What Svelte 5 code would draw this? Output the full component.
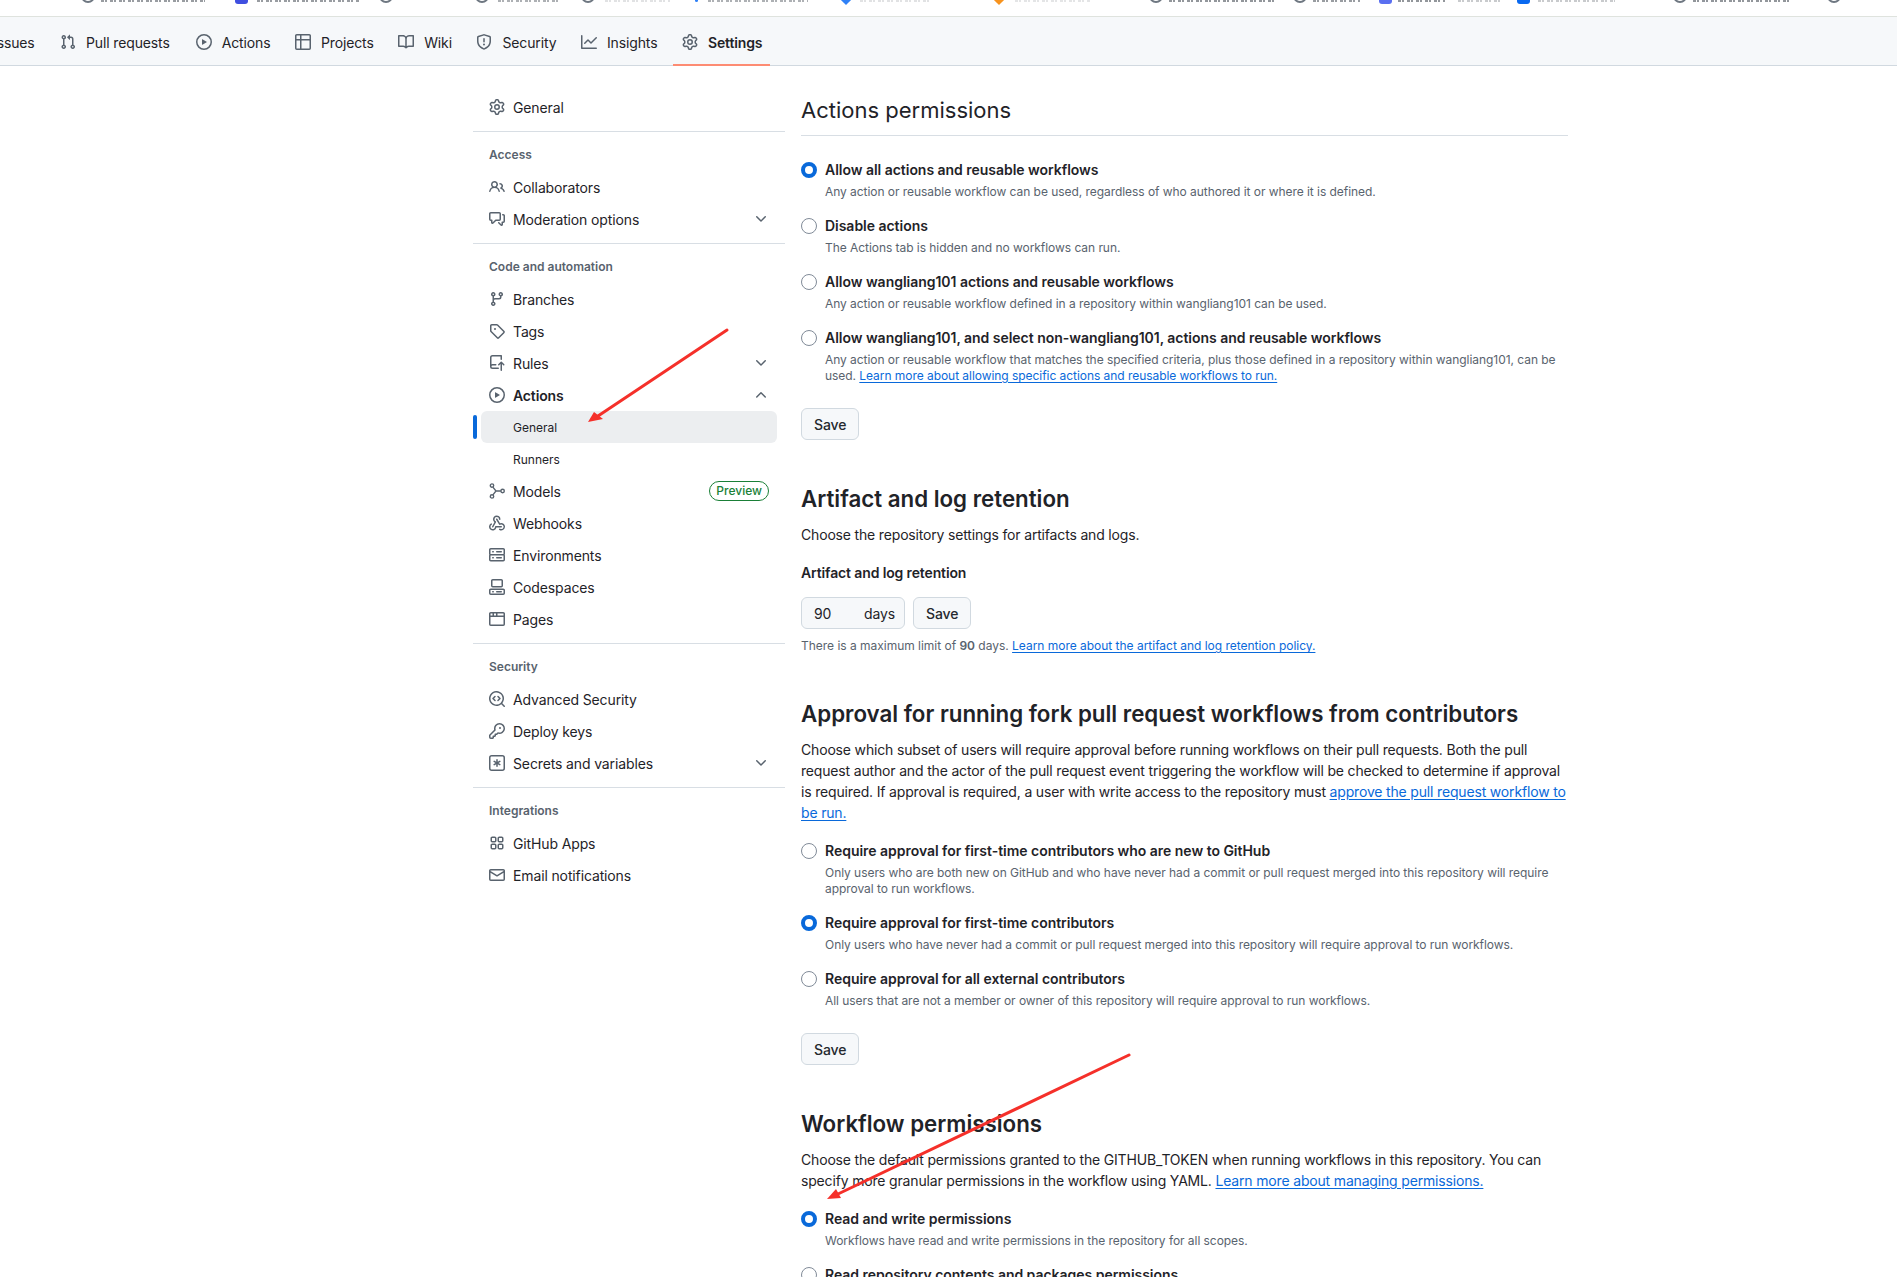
<script>
  const P = {
    gear: ["M8 0a8.2 8.2 0 0 1 .701.031C9.444.095 9.99.645 10.16 1.29l.288 1.107c.018.066.079.158.212.224.231.114.454.243.668.386.123.082.233.09.299.071l1.103-.303c.644-.176 1.392.021 1.82.63.27.385.506.792.704 1.218.315.675.111 1.422-.364 1.891l-.814.806c-.049.048-.098.147-.088.294.016.257.016.515 0 .772-.01.147.038.246.088.294l.814.806c.475.469.679 1.216.364 1.891a7.977 7.977 0 0 1-.704 1.217c-.428.61-1.176.807-1.82.63l-1.102-.302c-.067-.019-.177-.011-.3.071a5.909 5.909 0 0 1-.668.386c-.133.066-.194.158-.211.224l-.29 1.106c-.168.646-.715 1.196-1.458 1.26a8.006 8.006 0 0 1-1.402 0c-.743-.064-1.289-.614-1.458-1.26l-.289-1.106c-.018-.066-.079-.158-.212-.224a5.738 5.738 0 0 1-.668-.386c-.123-.082-.233-.09-.299-.071l-1.103.303c-.644.176-1.392-.021-1.82-.63a8.12 8.12 0 0 1-.704-1.218c-.315-.675-.111-1.422.363-1.891l.815-.806c.05-.048.098-.147.088-.294a6.214 6.214 0 0 1 0-.772c.01-.147-.038-.246-.088-.294l-.815-.806C.635 6.045.431 5.298.746 4.623a7.92 7.92 0 0 1 .704-1.217c.428-.61 1.176-.807 1.82-.63l1.102.302c.067.019.177.011.3-.071.214-.143.437-.272.668-.386.133-.066.194-.158.211-.224l.29-1.106C6.009.645 6.556.095 7.299.03 7.53.01 7.764 0 8 0Zm-.571 1.525c-.036.003-.108.036-.137.146l-.289 1.105c-.147.561-.549.967-.998 1.189-.173.086-.34.183-.5.29-.417.278-.97.423-1.529.27l-1.103-.303c-.109-.03-.175.016-.195.045-.22.312-.412.644-.573.99-.014.031-.021.11.059.19l.815.806c.411.406.562.957.53 1.456a4.709 4.709 0 0 0 0 .582c.032.499-.119 1.05-.53 1.456l-.815.806c-.081.08-.073.159-.059.19.162.346.353.677.573.989.02.03.085.076.195.046l1.102-.303c.56-.153 1.113-.008 1.53.27.161.107.328.204.501.29.447.222.85.629.997 1.189l.289 1.105c.029.109.101.143.137.146a6.6 6.6 0 0 0 1.142 0c.036-.003.108-.036.137-.146l.289-1.105c.147-.561.549-.967.998-1.189.173-.086.34-.183.5-.29.417-.278.97-.423 1.529-.27l1.103.303c.109.029.175-.016.195-.045.22-.313.411-.644.573-.99.014-.031.021-.11-.059-.19l-.815-.806c-.411-.406-.562-.957-.53-1.456a4.709 4.709 0 0 0 0-.582c-.032-.499.119-1.05.53-1.456l.815-.806c.081-.08.073-.159.059-.19a6.464 6.464 0 0 0-.573-.989c-.02-.03-.085-.076-.195-.046l-1.102.303c-.56.153-1.113.008-1.53-.27a4.44 4.44 0 0 0-.501-.29c-.447-.222-.85-.629-.997-1.189l-.289-1.105c-.029-.11-.101-.143-.137-.146a6.6 6.6 0 0 0-1.142 0ZM11 8a3 3 0 1 1-6 0 3 3 0 0 1 6 0ZM9.5 8a1.5 1.5 0 1 0-3.001.001A1.5 1.5 0 0 0 9.5 8Z"],
    pr: ["M1.5 3.25a2.25 2.25 0 1 1 3 2.122v5.256a2.251 2.251 0 1 1-1.5 0V5.372A2.25 2.25 0 0 1 1.5 3.25Zm5.677-.177L9.573.677A.25.25 0 0 1 10 .854V2.5h1A2.5 2.5 0 0 1 13.5 5v5.628a2.251 2.251 0 1 1-1.5 0V5a1 1 0 0 0-1-1h-1v1.646a.25.25 0 0 1-.427.177L7.177 3.427a.25.25 0 0 1 0-.354ZM3.75 2.5a.75.75 0 1 0 0 1.5.75.75 0 0 0 0-1.5Zm0 9.5a.75.75 0 1 0 0 1.5.75.75 0 0 0 0-1.5Zm8.25.75a.75.75 0 1 0 1.5 0 .75.75 0 0 0-1.5 0Z"],
    play: ["M8 0a8 8 0 1 1 0 16A8 8 0 0 1 8 0ZM1.5 8a6.5 6.5 0 1 0 13 0 6.5 6.5 0 0 0-13 0Zm4.879-2.773 4.264 2.559a.25.25 0 0 1 0 .428l-4.264 2.559A.25.25 0 0 1 6 10.559V5.442a.25.25 0 0 1 .379-.215Z"],
    table: ["M0 1.75C0 .784.784 0 1.75 0h12.5C15.216 0 16 .784 16 1.75v12.5A1.75 1.75 0 0 1 14.25 16H1.75A1.75 1.75 0 0 1 0 14.25ZM6.5 6.5v8h7.75a.25.25 0 0 0 .25-.25V6.5Zm8-1.5V1.75a.25.25 0 0 0-.25-.25H6.5V5Zm-13 1.5v7.75c0 .138.112.25.25.25H5v-8ZM5 5V1.5H1.75a.25.25 0 0 0-.25.25V5Z"],
    book: ["M0 1.75A.75.75 0 0 1 .75 1h4.253c1.227 0 2.317.59 3 1.501A3.743 3.743 0 0 1 11.006 1h4.245a.75.75 0 0 1 .75.75v10.5a.75.75 0 0 1-.75.75h-4.507a2.25 2.25 0 0 0-1.591.659l-.622.621a.75.75 0 0 1-1.06 0l-.622-.621A2.25 2.25 0 0 0 5.258 13H.75a.75.75 0 0 1-.75-.75Zm7.251 10.324.004-5.073-.002-2.253A2.25 2.25 0 0 0 5.003 2.5H1.5v9h3.757a3.75 3.75 0 0 1 1.994.574ZM8.755 4.75l-.004 7.322a3.752 3.752 0 0 1 1.992-.572H14.5v-9h-3.495a2.25 2.25 0 0 0-2.25 2.25Z"],
    shield: ["M7.467.133a1.748 1.748 0 0 1 1.066 0l5.25 1.68A1.75 1.75 0 0 1 15 3.48V7c0 1.566-.32 3.182-1.303 4.682-.983 1.498-2.585 2.813-5.032 3.855a1.697 1.697 0 0 1-1.33 0c-2.447-1.042-4.049-2.357-5.032-3.855C1.32 10.182 1 8.566 1 7V3.48a1.75 1.75 0 0 1 1.217-1.667Zm.61 1.429a.25.25 0 0 0-.153 0l-5.25 1.68a.25.25 0 0 0-.174.238V7c0 1.358.275 2.666 1.057 3.86.784 1.194 2.121 2.34 4.366 3.297a.196.196 0 0 0 .154 0c2.245-.956 3.582-2.104 4.366-3.298C13.225 9.666 13.5 8.36 13.5 7V3.48a.251.251 0 0 0-.174-.237l-5.25-1.68ZM8.75 4.75v3a.75.75 0 0 1-1.5 0v-3a.75.75 0 0 1 1.5 0ZM9 10.5a1 1 0 1 1-2 0 1 1 0 0 1 2 0Z"],
    graph: ["M1.5 1.75V13.5h13.75a.75.75 0 0 1 0 1.5H.75a.75.75 0 0 1-.75-.75V1.75a.75.75 0 0 1 1.5 0Zm14.28 2.53-5.25 5.25a.75.75 0 0 1-1.06 0L7 7.06 4.28 9.78a.751.751 0 0 1-1.042-.018.751.751 0 0 1-.018-1.042l3.25-3.25a.75.75 0 0 1 1.06 0L10 7.94l4.72-4.72a.751.751 0 0 1 1.042.018.751.751 0 0 1 .018 1.042Z"],
    people: ["M2 5.5a3.5 3.5 0 1 1 5.898 2.549 5.508 5.508 0 0 1 3.034 4.084.75.75 0 1 1-1.482.235 4 4 0 0 0-7.9 0 .75.75 0 0 1-1.482-.236A5.507 5.507 0 0 1 3.102 8.05 3.493 3.493 0 0 1 2 5.5ZM11 4a3.001 3.001 0 0 1 2.22 5.018 5.01 5.01 0 0 1 2.56 3.012.749.749 0 0 1-.885.954.752.752 0 0 1-.549-.514 3.507 3.507 0 0 0-2.522-2.372.75.75 0 0 1-.574-.73v-.352a.75.75 0 0 1 .416-.672A1.5 1.5 0 0 0 11 5.5.75.75 0 0 1 11 4Zm-5.5-.5a2 2 0 1 0-.001 3.999A2 2 0 0 0 5.5 3.5Z"],
    comment: ["M1.75 1h8.5c.966 0 1.75.784 1.75 1.75v5.5A1.75 1.75 0 0 1 10.25 10H7.061l-2.574 2.573A1.458 1.458 0 0 1 2 11.543V10h-.25A1.75 1.75 0 0 1 0 8.25v-5.5C0 1.784.784 1 1.75 1ZM1.5 2.75v5.5c0 .138.112.25.25.25h1a.75.75 0 0 1 .75.75v2.19l2.72-2.72a.749.749 0 0 1 .53-.22h3.5a.25.25 0 0 0 .25-.25v-5.5a.25.25 0 0 0-.25-.25h-8.5a.25.25 0 0 0-.25.25Zm13 2a.25.25 0 0 0-.25-.25h-.5a.75.75 0 0 1 0-1.5h.5c.966 0 1.75.784 1.75 1.75v5.5A1.75 1.75 0 0 1 14.25 12H14v1.543a1.458 1.458 0 0 1-2.487 1.03L9.22 12.28a.749.749 0 0 1 .326-1.275.749.749 0 0 1 .734.215l2.22 2.22v-2.19a.75.75 0 0 1 .75-.75h1a.25.25 0 0 0 .25-.25Z"],
    branch: ["M9.5 3.25a2.25 2.25 0 1 1 3 2.122V6A2.5 2.5 0 0 1 10 8.5H6a1 1 0 0 0-1 1v1.128a2.251 2.251 0 1 1-1.5 0V5.372a2.25 2.25 0 1 1 1.5 0v1.836A2.493 2.493 0 0 1 6 7h4a1 1 0 0 0 1-1v-.628A2.25 2.25 0 0 1 9.5 3.25Zm-6 0a.75.75 0 1 0 1.5 0 .75.75 0 0 0-1.5 0Zm8.25-.75a.75.75 0 1 0 0 1.5.75.75 0 0 0 0-1.5ZM4.25 12a.75.75 0 1 0 0 1.5.75.75 0 0 0 0-1.5Z"],
    tag: ["M1 7.775V2.75C1 1.784 1.784 1 2.75 1h5.025c.464 0 .91.184 1.238.513l6.25 6.25a1.75 1.75 0 0 1 0 2.474l-5.026 5.026a1.75 1.75 0 0 1-2.474 0l-6.25-6.25A1.752 1.752 0 0 1 1 7.775Zm1.5 0c0 .066.026.13.073.177l6.25 6.25a.25.25 0 0 0 .354 0l5.025-5.025a.25.25 0 0 0 0-.354l-6.25-6.25a.25.25 0 0 0-.177-.073H2.75a.25.25 0 0 0-.25.25ZM6 5a1 1 0 1 1 0 2 1 1 0 0 1 0-2Z"],
    rules: ["M1 2.5A2.5 2.5 0 0 1 3.5 0h8.75a.75.75 0 0 1 .75.75v3.5a.75.75 0 0 1-1.5 0V1.5h-8a1 1 0 0 0-1 1v6.708A2.493 2.493 0 0 1 3.5 9h3.25a.75.75 0 0 1 0 1.5H3.5a1 1 0 0 0 0 2h5.75a.75.75 0 0 1 0 1.5H3.5A2.5 2.5 0 0 1 1 11.5Zm13.23 7.79h-.001l-1.224-1.224v6.184a.75.75 0 0 1-1.5 0V9.066L10.28 10.29a.75.75 0 0 1-1.06-1.061l2.505-2.504a.75.75 0 0 1 1.06 0L15.29 9.23a.751.751 0 0 1-.018 1.042.751.751 0 0 1-1.042.018Z"],
    webhook: ["M5.5 4.25a2.25 2.25 0 0 1 4.5 0 .75.75 0 0 0 1.5 0 3.75 3.75 0 1 0-6.14 2.889l-2.272 4.258a.75.75 0 0 0 1.324.706L7 7.25a.75.75 0 0 0-.309-1.015A2.25 2.25 0 0 1 5.5 4.25Z", "M7.364 3.607a.75.75 0 0 1 1.03.257l2.608 4.349a3.75 3.75 0 1 1-.628 6.785.75.75 0 0 1 .752-1.299 2.25 2.25 0 1 0-.033-3.88.75.75 0 0 1-1.03-.256L7.107 4.636a.75.75 0 0 1 .257-1.03Z", "M2.9 8.776A.75.75 0 0 1 2.625 9.8 2.25 2.25 0 1 0 6 11.75a.75.75 0 0 1 .75-.751h5.5a.75.75 0 0 1 0 1.5H7.425a3.751 3.751 0 1 1-5.55-3.998.75.75 0 0 1 1.024.274Z"],
    server: ["M1.75 1h12.5c.966 0 1.75.784 1.75 1.75v4c0 .372-.116.717-.314 1 .198.283.314.628.314 1v4a1.75 1.75 0 0 1-1.75 1.75H1.75A1.75 1.75 0 0 1 0 12.75v-4c0-.358.109-.707.314-1a1.739 1.739 0 0 1-.314-1v-4C0 1.784.784 1 1.75 1ZM1.5 2.75v4c0 .138.112.25.25.25h12.5a.25.25 0 0 0 .25-.25v-4a.25.25 0 0 0-.25-.25H1.75a.25.25 0 0 0-.25.25Zm.25 5.75a.25.25 0 0 0-.25.25v4c0 .138.112.25.25.25h12.5a.25.25 0 0 0 .25-.25v-4a.25.25 0 0 0-.25-.25ZM7 4.75A.75.75 0 0 1 7.75 4h4.5a.75.75 0 0 1 0 1.5h-4.5A.75.75 0 0 1 7 4.75ZM7.75 10h4.5a.75.75 0 0 1 0 1.5h-4.5a.75.75 0 0 1 0-1.5ZM3 4.75A.75.75 0 0 1 3.75 4h.5a.75.75 0 0 1 0 1.5h-.5A.75.75 0 0 1 3 4.75ZM3.75 10h.5a.75.75 0 0 1 0 1.5h-.5a.75.75 0 0 1 0-1.5Z"],
    codespaces: ["M0 11.25c0-.966.784-1.75 1.75-1.75h12.5c.966 0 1.75.784 1.75 1.75v3A1.75 1.75 0 0 1 14.25 16H1.75A1.75 1.75 0 0 1 0 14.25Zm2-9.5C2 .784 2.784 0 3.75 0h8.5C13.216 0 14 .784 14 1.75v5a1.75 1.75 0 0 1-1.75 1.75h-8.5A1.75 1.75 0 0 1 2 6.75Zm1.75-.25a.25.25 0 0 0-.25.25v5c0 .138.112.25.25.25h8.5a.25.25 0 0 0 .25-.25v-5a.25.25 0 0 0-.25-.25Zm-2 9.5a.25.25 0 0 0-.25.25v3c0 .138.112.25.25.25h12.5a.25.25 0 0 0 .25-.25v-3a.25.25 0 0 0-.25-.25Z", "M7 12.75a.75.75 0 0 1 .75-.75h4.5a.75.75 0 0 1 0 1.5h-4.5a.75.75 0 0 1-.75-.75Zm-4 0a.75.75 0 0 1 .75-.75h.5a.75.75 0 0 1 0 1.5h-.5a.75.75 0 0 1-.75-.75Z"],
    browser: ["M0 2.75C0 1.784.784 1 1.75 1h12.5c.966 0 1.75.784 1.75 1.75v10.5A1.75 1.75 0 0 1 14.25 15H1.75A1.75 1.75 0 0 1 0 13.25ZM14.5 6h-13v7.25c0 .138.112.25.25.25h12.5a.25.25 0 0 0 .25-.25Zm-6-3.5v2h6V2.75a.25.25 0 0 0-.25-.25ZM5 2.5v2h2v-2Zm-3.25 0a.25.25 0 0 0-.25.25V4.5h2v-2Z"],
    codescan: ["M8.47 4.97a.75.75 0 0 0 0 1.06L9.94 7.5 8.47 8.97a.75.75 0 1 0 1.06 1.06l2-2a.75.75 0 0 0 0-1.06l-2-2a.75.75 0 0 0-1.06 0ZM6.53 6.03a.75.75 0 0 0-1.06-1.06l-2 2a.75.75 0 0 0 0 1.06l2 2a.75.75 0 1 0 1.06-1.06L5.06 7.5l1.47-1.47Z", "M12.246 13.307a7.501 7.501 0 1 1 1.06-1.06l2.474 2.473a.749.749 0 0 1-.326 1.275.749.749 0 0 1-.734-.215ZM1.5 7.5a6.002 6.002 0 0 0 3.608 5.504 6.002 6.002 0 0 0 6.486-1.117.748.748 0 0 1 .292-.293A6 6 0 1 0 1.5 7.5Z"],
    key: ["M10.5 0a5.499 5.499 0 1 1-1.288 10.848l-.932.932a.749.749 0 0 1-.53.22H7v.75a.749.749 0 0 1-.22.53l-.5.5a.749.749 0 0 1-.53.22H5v.75a.749.749 0 0 1-.22.53l-.5.5a.749.749 0 0 1-.53.22h-2A1.75 1.75 0 0 1 0 14.25v-2c0-.199.079-.389.22-.53l4.932-4.932A5.5 5.5 0 0 1 10.5 0Zm-4 5.5c-.001.431.069.86.205 1.269a.75.75 0 0 1-.181.768L1.5 12.56v1.69c0 .138.112.25.25.25h1.69l.06-.06v-1.19a.75.75 0 0 1 .75-.75h1.19l.06-.06v-1.19a.75.75 0 0 1 .75-.75h1.19l1.023-1.025a.75.75 0 0 1 .768-.18A4 4 0 1 0 6.5 5.5ZM11 6a1 1 0 1 1 0-2 1 1 0 0 1 0 2Z"],
    asterisk: ["M0 2.75A2.75 2.75 0 0 1 2.75 0h10.5A2.75 2.75 0 0 1 16 2.75v10.5A2.75 2.75 0 0 1 13.25 16H2.75A2.75 2.75 0 0 1 0 13.25ZM2.75 1.5c-.69 0-1.25.56-1.25 1.25v10.5c0 .69.56 1.25 1.25 1.25h10.5c.69 0 1.25-.56 1.25-1.25V2.75c0-.69-.56-1.25-1.25-1.25Z", "M8 4a.75.75 0 0 1 .75.75V6.7l1.69-.975a.75.75 0 0 1 .75 1.3L9.5 8l1.69.976a.75.75 0 0 1-.75 1.298L8.75 9.3v1.951a.75.75 0 0 1-1.5 0V9.299l-1.69.976a.75.75 0 0 1-.75-1.3L6.5 8l-1.69-.975a.75.75 0 0 1 .75-1.3l1.69.976V4.75A.75.75 0 0 1 8 4Z"],
    apps: ["M1.5 3.25c0-.966.784-1.75 1.75-1.75h2.5c.966 0 1.75.784 1.75 1.75v2.5A1.75 1.75 0 0 1 5.75 7.5h-2.5A1.75 1.75 0 0 1 1.5 5.75Zm7 0c0-.966.784-1.75 1.75-1.75h2.5c.966 0 1.75.784 1.75 1.75v2.5a1.75 1.75 0 0 1-1.75 1.75h-2.5A1.75 1.75 0 0 1 8.5 5.75Zm-7 7c0-.966.784-1.75 1.75-1.75h2.5c.966 0 1.75.784 1.75 1.75v2.5a1.75 1.75 0 0 1-1.75 1.75h-2.5a1.75 1.75 0 0 1-1.75-1.75Zm7 0c0-.966.784-1.75 1.75-1.75h2.5c.966 0 1.75.784 1.75 1.75v2.5a1.75 1.75 0 0 1-1.75 1.75h-2.5a1.75 1.75 0 0 1-1.75-1.75ZM3.25 3a.25.25 0 0 0-.25.25v2.5c0 .138.112.25.25.25h2.5A.25.25 0 0 0 6 5.75v-2.5A.25.25 0 0 0 5.75 3Zm7 0a.25.25 0 0 0-.25.25v2.5c0 .138.112.25.25.25h2.5a.25.25 0 0 0 .25-.25v-2.5a.25.25 0 0 0-.25-.25ZM3 10.25v2.5c0 .138.112.25.25.25h2.5a.25.25 0 0 0 .25-.25v-2.5a.25.25 0 0 0-.25-.25h-2.5a.25.25 0 0 0-.25.25Zm7.25-.25a.25.25 0 0 0-.25.25v2.5c0 .138.112.25.25.25h2.5a.25.25 0 0 0 .25-.25v-2.5a.25.25 0 0 0-.25-.25Z"],
    mail: ["M1.75 2h12.5c.966 0 1.75.784 1.75 1.75v8.5A1.75 1.75 0 0 1 14.25 14H1.75A1.75 1.75 0 0 1 0 12.25v-8.5C0 2.784.784 2 1.75 2ZM1.5 12.251c0 .138.112.25.25.25h12.5a.25.25 0 0 0 .25-.25V5.809L8.38 9.397a.75.75 0 0 1-.76 0L1.5 5.809v6.442Zm13-8.181v-.32a.25.25 0 0 0-.25-.25H1.75a.25.25 0 0 0-.25.25v.32L8 7.88Z"],
    down: ["M12.78 5.22a.749.749 0 0 1 0 1.06l-4.25 4.25a.749.749 0 0 1-1.06 0L3.22 6.28a.749.749 0 1 1 1.06-1.06L8 8.939l3.72-3.719a.749.749 0 0 1 1.06 0Z"],
    up: ["M3.22 10.53a.749.749 0 0 1 0-1.06l4.25-4.25a.749.749 0 0 1 1.06 0l4.25 4.25a.749.749 0 1 1-1.06 1.06L8 6.811 4.28 10.53a.749.749 0 0 1-1.06 0Z"]
  };

  const tabs = [
    { label: "Pull requests", icon: "pr" },
    { label: "Actions", icon: "play" },
    { label: "Projects", icon: "table" },
    { label: "Wiki", icon: "book" },
    { label: "Security", icon: "shield" },
    { label: "Insights", icon: "graph" },
    { label: "Settings", icon: "gear", active: true }
  ];

  const groups = [
    { title: "Access", items: [
      { label: "Collaborators", icon: "people" },
      { label: "Moderation options", icon: "comment", chev: "down" }
    ]},
    { title: "Code and automation", items: [
      { label: "Branches", icon: "branch" },
      { label: "Tags", icon: "tag" },
      { label: "Rules", icon: "rules", chev: "down" },
      { label: "Actions", icon: "play", chev: "up", bold: true },
      { label: "General", sub: true, current: true },
      { label: "Runners", sub: true },
      { label: "Models", icon: "models", badge: "Preview" },
      { label: "Webhooks", icon: "webhook" },
      { label: "Environments", icon: "server" },
      { label: "Codespaces", icon: "codespaces" },
      { label: "Pages", icon: "browser" }
    ]},
    { title: "Security", items: [
      { label: "Advanced Security", icon: "codescan" },
      { label: "Deploy keys", icon: "key" },
      { label: "Secrets and variables", icon: "asterisk", chev: "down" }
    ]},
    { title: "Integrations", items: [
      { label: "GitHub Apps", icon: "apps" },
      { label: "Email notifications", icon: "mail" }
    ]}
  ];

  // Bottoms of the browser bookmark bar, of which only the last pixels are in frame.
  const marks = [
    { x: 81, k: "ring" }, { x: 235, k: "block", c: "#3f4fe0" }, { x: 379, k: "ring" }, { x: 475, k: "ring" },
    { x: 581, k: "ring" }, { x: 695, k: "dot", c: "#2f81f7" }, { x: 841, k: "drop", c: "#2f81f7" },
    { x: 994, k: "drop", c: "#f7931e" }, { x: 1149, k: "ring" }, { x: 1293, k: "ring" },
    { x: 1379, k: "block", c: "#5a6ff0" }, { x: 1517, k: "block", c: "#0969f0" }, { x: 1673, k: "ring" }, { x: 1827, k: "ring" }
  ];
  const texts = [
    [101, 205, .75], [257, 360, .75], [498, 560, .6], [605, 670, .22], [708, 808, .6],
    [860, 930, .22], [1015, 1090, .2], [1169, 1275, .8], [1313, 1360, .75], [1398, 1445, .8],
    [1458, 1500, .4], [1538, 1615, .4], [1693, 1790, .8]
  ];
</script>

{#snippet icon(name)}
  <svg class="ic" viewBox="0 0 16 16" width="16" height="16" aria-hidden="true">
    {#if name === "models"}
      <g fill="none" stroke="currentColor" stroke-width="1.4">
        <circle cx="3" cy="2.6" r="1.7" /><circle cx="3" cy="13.4" r="1.7" /><circle cx="13.6" cy="8" r="1.7" />
        <path d="M3.9 4.1 7 8 3.9 11.9M7 8h4.9" />
      </g>
    {:else}
      {#each P[name] as d}<path {d} fill="currentColor" fill-rule="evenodd" />{/each}
    {/if}
  </svg>
{/snippet}

{#snippet row(item)}
  <div class="row" class:current={item.current}>
    {#if item.current}<span class="bar"></span>{/if}
    <div class="row-inner">
      <span class="lead">{#if item.icon}{@render icon(item.icon)}{/if}</span>
      <span class="lbl" class:bold={item.bold} class:sub={item.sub}>{item.label}</span>
      {#if item.badge}<span class="badge">{item.badge}</span>{/if}
      {#if item.chev}<span class="chev">{@render icon(item.chev)}</span>{/if}
    </div>
  </div>
{/snippet}

{#snippet radio(checked, label, note, link = "")}
  <div class="radio-row">
    <span class="radio" class:on={checked}></span>
    <div class="radio-text">
      <div class="radio-label">{label}</div>
      <div class="radio-note">{note}{#if link}{" "}<a href="#x">{link}</a>{/if}</div>
    </div>
  </div>
{/snippet}

<div class="page">
  <div class="bookmarks">
    {#each marks as m}
      <i class="mark {m.k}" style="left:{m.x}px;{m.c ? `--c:${m.c}` : ''}"></i>
    {/each}
    {#each texts as t}
      <i class="mtext" style="left:{t[0]}px;width:{t[1] - t[0]}px;opacity:{t[2]}"></i>
    {/each}
  </div>

  <nav class="tabs">
    <span class="tab cut">Issues</span>
    {#each tabs as t}
      <span class="tab" class:active={t.active}>
        {@render icon(t.icon)}<span>{t.label}</span>
      </span>
    {/each}
  </nav>

  <div class="layout">
    <aside class="side">
      <div class="row"><div class="row-inner"><span class="lead">{@render icon("gear")}</span><span class="lbl">General</span></div></div>
      {#each groups as g}
        <div class="group">
          <div class="group-title">{g.title}</div>
          {#each g.items as item}{@render row(item)}{/each}
        </div>
      {/each}
    </aside>

    <main class="main">
      <h2 class="h-first">Actions permissions</h2>
      <div class="opts first">
        {@render radio(true, "Allow all actions and reusable workflows", "Any action or reusable workflow can be used, regardless of who authored it or where it is defined.")}
        {@render radio(false, "Disable actions", "The Actions tab is hidden and no workflows can run.")}
        {@render radio(false, "Allow wangliang101 actions and reusable workflows", "Any action or reusable workflow defined in a repository within wangliang101 can be used.")}
        {@render radio(false, "Allow wangliang101, and select non-wangliang101, actions and reusable workflows", "Any action or reusable workflow that matches the specified criteria, plus those defined in a repository within wangliang101, can be used.", "Learn more about allowing specific actions and reusable workflows to run.")}
      </div>
      <button class="btn save1">Save</button>

      <h2 class="h-sec s2">Artifact and log retention</h2>
      <p class="para">Choose the repository settings for artifacts and logs.</p>
      <div class="field-label">Artifact and log retention</div>
      <div class="retention">
        <div class="days"><span>90</span><span>days</span></div>
        <button class="btn">Save</button>
      </div>
      <div class="limit">There is a maximum limit of <strong>90</strong> days. <a href="#x">Learn more about the artifact and log retention policy.</a></div>

      <h2 class="h-sec s3">Approval for running fork pull request workflows from contributors</h2>
      <p class="para">Choose which subset of users will require approval before running workflows on their pull requests. Both the pull request author and the actor of the pull request event triggering the workflow will be checked to determine if approval is required. If approval is required, a user with write access to the repository must <a href="#x">approve the pull request workflow to be run.</a></p>
      <div class="opts o2">
        {@render radio(false, "Require approval for first-time contributors who are new to GitHub", "Only users who are both new on GitHub and who have never had a commit or pull request merged into this repository will require approval to run workflows.")}
        {@render radio(true, "Require approval for first-time contributors", "Only users who have never had a commit or pull request merged into this repository will require approval to run workflows.")}
        {@render radio(false, "Require approval for all external contributors", "All users that are not a member or owner of this repository will require approval to run workflows.")}
      </div>
      <button class="btn save1">Save</button>

      <h2 class="h-sec s4">Workflow permissions</h2>
      <p class="para">Choose the default permissions granted to the GITHUB_TOKEN when running workflows in this repository. You can specify more granular permissions in the workflow using YAML. <a href="#x">Learn more about managing permissions.</a></p>
      <div class="opts o3">
        {@render radio(true, "Read and write permissions", "Workflows have read and write permissions in the repository for all scopes.")}
        {@render radio(false, "Read repository contents and packages permissions", "")}
      </div>
    </main>
  </div>

  <svg class="arrows" width="1897" height="1277" viewBox="0 0 1897 1277" aria-hidden="true">
    <g stroke="#f5302a" stroke-width="3" fill="#f5302a" stroke-linecap="round">
      <line x1="727" y1="330" x2="598" y2="416" />
      <polygon stroke="none" points="588,422 594,412 603,419" />
      <line x1="1129" y1="1055" x2="838" y2="1194" />
      <polygon stroke="none" points="827,1199 836,1189 841,1198" />
    </g>
  </svg>
</div>

<style>
  :global(body) { margin: 0; background: #fff; }
  .page {
    position: relative; width: 1897px; height: 1277px; overflow: hidden; background: #fff;
    font-family: Inter, "Noto Sans", "Liberation Sans", sans-serif; color: #1f2328;
    font-size: 14px; letter-spacing: -0.13px;
  }
  .bookmarks { position: relative; height: 16px; border-bottom: 1px solid #dfe3de; overflow: hidden; }
  .mark { position: absolute; display: block; --c: #6e7781; }
  .mark.ring { top: -11px; width: 10px; height: 10px; border: 2px solid #6e7781; border-radius: 50%; }
  .mark.block { top: -8px; width: 13px; height: 12px; border-radius: 3px; background: var(--c); }
  .mark.dot { top: -1px; width: 3px; height: 3px; border-radius: 50%; background: var(--c); }
  .mark.drop { top: -7px; width: 10px; height: 10px; background: var(--c); transform: rotate(45deg); }
  .mtext {
    position: absolute; top: 0; height: 2px; display: block;
    background: repeating-linear-gradient(90deg, #777c82 0 3px, #fff 3px 4px, #777c82 4px 6px, #fff 6px 9px);
  }

  .tabs {
    height: 49px; box-sizing: border-box; background: #f6f8fa; border-bottom: 1px solid #d1d9e0;
    display: flex; align-items: stretch; padding: 2px 0 0 60px; position: relative;
  }
  .tab { display: flex; align-items: center; gap: 10px; margin-right: 24.5px; position: relative; white-space: nowrap; }
  .tab:nth-child(2) { margin-right: 26px; }
  .tab :global(svg) { color: #59636e; flex: none; }
  .tab.cut { position: absolute; left: -7px; top: 2px; bottom: 0; margin: 0; }
  .tab.active { font-weight: 600; }
  .tab.active::after {
    content: ""; position: absolute; left: -9px; right: -8px; bottom: -1px; height: 2px; background: #fd8c73;
  }

  .layout { display: flex; align-items: flex-start; padding-left: 473px; }

  .side { width: 312px; flex: none; padding-top: 25px; }
  .row { height: 32px; position: relative; }
  .row-inner { height: 32px; margin: 0 8px; display: flex; align-items: center; border-radius: 6px; padding: 0 8px; }
  .lead { width: 16px; height: 16px; margin-right: 8px; color: #59636e; flex: none; display: flex; }
  .lbl { flex: 1; white-space: nowrap; }
  .lbl.bold { font-weight: 600; }
  .lbl.sub { font-size: 12px; letter-spacing: 0; }
  .chev { color: #59636e; display: flex; }
  .row.current .row-inner { background: #eceef0; }
  .bar { position: absolute; left: 0; top: 4px; bottom: 4px; width: 4px; border-radius: 2px; background: #0969da; }
  .badge {
    font-size: 12px; font-weight: 500; line-height: 18px; letter-spacing: 0; color: #1a7f37; border: 1px solid #1a7f37;
    border-radius: 10px; padding: 0 6px;
  }
  .group { border-top: 1px solid #d8dee4; margin-top: 8px; padding-top: 7px; }
  .group-title { height: 32px; padding-left: 16px; line-height: 32px; font-size: 12px; font-weight: 600; color: #59636e; letter-spacing: 0; }

  .main { width: 767px; margin-left: 16px; flex: none; }
  h2 { margin: 0; line-height: 30px; color: #1f2328; white-space: nowrap; letter-spacing: 0; }
  .h-first { font-size: 22px; font-weight: 400; margin-top: 29px; padding-bottom: 10px; border-bottom: 1px solid #d8dee4; height: 30px; }
  .h-sec { font-size: 22.3px; font-weight: 600; }
  .s2, .s3, .s4 { margin-top: 44px; }
  .para { margin: 10px 0 0; line-height: 21px; letter-spacing: -0.17px; }
  .opts { display: flex; flex-direction: column; }
  .opts.first { margin-top: 24px; }
  .o2 { margin-top: 18px; }
  .o3 { margin-top: 18px; }
  .radio-row { display: flex; gap: 8px; margin-bottom: 16px; }
  .radio { width: 16px; height: 16px; border-radius: 50%; border: 1px solid #818b98; box-sizing: border-box; background: #fff; flex: none; margin-top: 2px; }
  .radio.on { border: 4px solid #0969da; }
  .radio-label { font-weight: 600; line-height: 20px; letter-spacing: -0.03px; }
  .radio-note { font-size: 12px; line-height: 16px; color: #59636e; margin-top: 4px; letter-spacing: -0.05px; }
  .radio-note:empty { display: none; }
  a { color: #0969da; text-decoration: underline; text-underline-offset: 2px; }
  .btn {
    display: block; height: 32px; box-sizing: border-box; padding: 0 12px; font: 500 14px Inter, sans-serif; letter-spacing: -0.13px; color: #25292e;
    background: #f6f8fa; border: 1px solid #d1d9e0; border-radius: 6px;
  }
  .save1 { margin-top: 8px; }
  .field-label { margin-top: 17px; font-weight: 600; line-height: 21px; }
  .retention { display: flex; gap: 8px; margin-top: 14px; }
  .days {
    width: 104px; height: 32px; box-sizing: border-box; background: #f6f8fa; border: 1px solid #d1d9e0; border-radius: 6px;
    display: flex; align-items: center; justify-content: space-between; padding: 0 9px 0 12px;
  }
  .limit { font-size: 12px; line-height: 18px; color: #59636e; margin-top: 8px; letter-spacing: -0.02px; }
  .limit strong { font-weight: 600; }

  .arrows { position: absolute; left: 0; top: 0; pointer-events: none; }
</style>
